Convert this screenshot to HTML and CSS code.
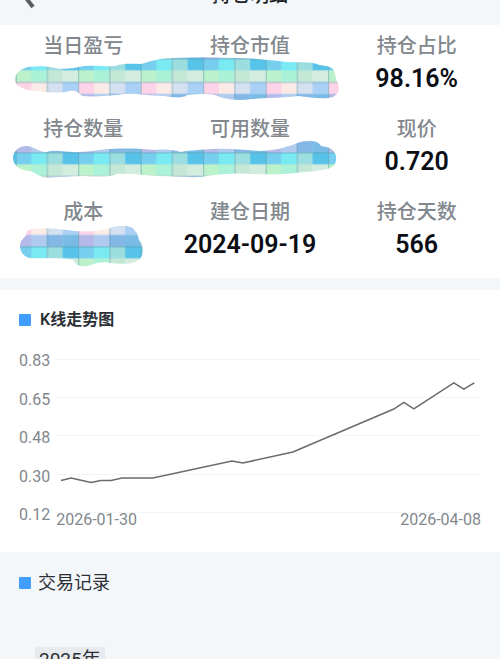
FILE: index.html
```html
<!DOCTYPE html>
<html lang="zh-CN">
<head>
    <meta charset="UTF-8">
    <meta name="viewport" content="width=device-width, initial-scale=1.0">
    <title>持仓明细</title>
    <link rel="stylesheet" href="styles.css">
</head>
<body>
    <header class="topbar">
        <button class="back" type="button" aria-label="返回">
            <svg width="16" height="28" viewBox="0 0 16 28"><path d="M13 1 L3 13 L13 26" fill="none" stroke="#5a5e63" stroke-width="4"/></svg>
        </button>
        <h1>持仓明细</h1>
    </header>

    <section class="stats">
        <!-- mosaic shared by the masked values -->
        <svg class="defs" width="0" height="0">
            <defs>
                <pattern id="mosaic" x="15.7" y="58.5" width="62.5" height="47" patternUnits="userSpaceOnUse">
                    <rect x="0" y="0" width="16" height="12" fill="#76cfee"/>
                    <rect x="15.6" y="0" width="16" height="12" fill="#79e9f2"/>
                    <rect x="31.2" y="0" width="16" height="12" fill="#9cdee0"/>
                    <rect x="46.8" y="0" width="16" height="12" fill="#58c3e8"/>
                    <rect x="0" y="11.8" width="16" height="12" fill="#bbf1cb"/>
                    <rect x="15.6" y="11.8" width="16" height="12" fill="#abf1d8"/>
                    <rect x="31.2" y="11.8" width="16" height="12" fill="#c5e7d5"/>
                    <rect x="46.8" y="11.8" width="16" height="12" fill="#d2ece0"/>
                    <rect x="0" y="23.5" width="16" height="12" fill="#fdd3e7"/>
                    <rect x="15.6" y="23.5" width="16" height="12" fill="#fceae6"/>
                    <rect x="31.2" y="23.5" width="16" height="12" fill="#d5e0f1"/>
                    <rect x="46.8" y="23.5" width="16" height="12" fill="#abd0f5"/>
                    <rect x="0" y="35.3" width="16" height="12" fill="#b4bae8"/>
                    <rect x="15.6" y="35.3" width="16" height="12" fill="#b0cbee"/>
                    <rect x="31.2" y="35.3" width="16" height="12" fill="#83b8e6"/>
                    <rect x="46.8" y="35.3" width="16" height="12" fill="#79bbe5"/>
                    <path d="M0.5 0V47M31.7 0V47M0 0.5H63M0 24H63" stroke="#4f8fa0" stroke-opacity="0.5" fill="none"/>
                </pattern>
            </defs>
        </svg>

        <div class="label">当日盈亏</div>
        <div class="label">持仓市值</div>
        <div class="label">持仓占比</div>
        <svg class="masked wide" width="333" height="43" viewBox="0 65 333 43">
            <path fill="url(#mosaic)" d="M15 79C15 73 21 69 28 67C38 66 47 66 55 68C66 70 74 68 84 66C96 65 106 67 115 66C124 63 132 64 141 64C151 61 161 58 174 58C194 57 214 57 234 58C252 58 270 60 287 62C300 63 312 61 319 65C326 66 332 66 334 71C336 76 336 80 338 84C341 91 337 97 328 98C318 99 309 97 298 96C282 98 264 98 252 99C241 101 229 100 220 97C212 93 201 94 187 95C183 99 171 97 164 96C148 96 137 93 124 94C108 96 94 97 83 96C77 94 79 90 70 91C58 94 47 92 36 91C23 90 14 85 15 79Z"/>
        </svg>
        <div class="value">98.16%</div>

        <div class="label">持仓数量</div>
        <div class="label">可用数量</div>
        <div class="label">现价</div>
        <svg class="masked wide" width="333" height="43" viewBox="0 148 333 43">
            <path fill="url(#mosaic)" d="M13 158C13 151 19 146 26 146C34 146 38 152 46 152C57 149 68 153 79 152C91 152 100 149 111 149C128 148 145 149 155 150C166 149 174 150 181 152C190 150 202 150 213 149C230 148 244 150 260 151C275 151 286 147 295 144C305 140 317 139 321 146C329 147 334 149 336 156C337 164 333 168 327 169C316 172 306 171 296 173C278 175 264 174 251 174C234 173 221 174 207 176C191 179 176 176 160 176C146 176 131 173 117 174C111 177 100 177 84 176C70 176 58 177 48 178C39 177 36 173 30 171C21 171 13 166 13 158Z"/>
        </svg>
        <div class="value">0.720</div>

        <div class="label">成本</div>
        <div class="label">建仓日期</div>
        <div class="label">持仓天数</div>
        <svg class="masked" width="160" height="43" viewBox="0 231 160 43">
            <path fill="url(#mosaic)" d="M20 246C20 241 24 238 26 235C26 231 29 229 34 229C48 227 60 229 74 231C86 232 98 231 108 229C117 225 132 224 135 231C139 234 137 238 141 243C144 250 143 256 139 260C131 265 120 264 110 263C101 261 94 264 88 266C80 267 75 265 73 260C59 257 43 259 29 258C23 256 20 251 20 246Z"/>
        </svg>
        <div class="value">2024-09-19</div>
        <div class="value">566</div>
    </section>

    <section class="trend">
        <h2 class="title">K线走势图</h2>
        <div class="chart">
            <div class="axis-y">
                <span>0.83</span>
                <span>0.65</span>
                <span>0.48</span>
                <span>0.30</span>
                <span>0.12</span>
            </div>
            <div class="plot">
                <svg viewBox="0 0 425 154" preserveAspectRatio="none" role="img" aria-label="K线走势图">
                    <path class="grid" d="M0 0.5H425M0 38.5H425M0 76.5H425M0 115.5H425M0 153.5H425"/>
                    <polyline class="line" points="5,121.5 15,119 25,121.2 35,123.5 45,121.5 55,121.5 66,119 97,119 176,102 187,104 237,93 338,50 348,43.3 358,49.8 398,23.8 408,30.2 418.5,23.8"/>
                </svg>
                <div class="axis-x">
                    <span>2026-01-30</span>
                    <span>2026-04-08</span>
                </div>
            </div>
        </div>
    </section>

    <section class="records">
        <h2 class="title">交易记录</h2>
        <div class="year">2025年</div>
    </section>
</body>
</html>
```
FILE: styles.css
```css
* {
    box-sizing: border-box;
}

body {
    margin: 0;
    font-family: Roboto, "Noto Sans CJK SC", sans-serif;
    background: #f3f7fa;
    color: #2c3035;
}

.topbar {
    position: relative;
    display: flex;
    align-items: flex-end;
    justify-content: center;
    height: 25px;
    padding-bottom: 15px;
    overflow: hidden;
}

.topbar h1 {
    margin: 0;
    font-size: 19px;
    line-height: 28px;
    font-weight: 500;
    color: #1b1f24;
}

.back {
    position: absolute;
    left: 20px;
    bottom: 16px;
    padding: 0;
    border: none;
    background: none;
    line-height: 0;
}

.stats {
    display: grid;
    grid-template-columns: repeat(3, 1fr);
    padding-bottom: 4px;
    background: #fff;
    text-align: center;
}

.defs {
    position: absolute;
}

.label {
    height: 40px;
    font-size: 20px;
    line-height: 42px;
    font-weight: 500;
    color: #82888d;
}

.value {
    height: 43px;
    font-size: 25px;
    line-height: 27px;
    font-weight: 600;
    color: #0b0e14;
}

.masked {
    display: block;
    overflow: visible;
}

.wide {
    grid-column: span 2;
}

.trend {
    margin-top: 12px;
    padding: 18px 19px 22px;
    background: #fff;
}

.title {
    display: flex;
    align-items: center;
    gap: 9px;
    margin: 0;
    font-size: 16px;
    line-height: 24px;
    font-weight: 600;
}

.title::before {
    content: "";
    width: 12px;
    height: 12px;
    border-radius: 1px;
    background: #409eff;
}

.chart {
    display: flex;
    gap: 6px;
    margin-top: 19px;
    font-size: 16px;
    line-height: 20px;
    color: #82878c;
}

.axis-y {
    display: flex;
    flex-direction: column;
    justify-content: space-between;
    height: 174px;
}

.plot {
    flex: 1;
    padding-top: 8px;
}

.plot svg {
    display: block;
    width: 100%;
    height: 154px;
}

.grid {
    fill: none;
    stroke: #f3f4f5;
}

.line {
    fill: none;
    stroke: #6b6b6e;
    stroke-width: 1.5;
    vector-effect: non-scaling-stroke;
}

.axis-x {
    display: flex;
    justify-content: space-between;
    margin-top: -3px;
}

.records {
    padding: 17px 19px;
}

.records .title {
    gap: 7px;
    font-size: 18px;
    line-height: 28px;
    font-weight: 400;
}

.year {
    width: fit-content;
    margin: 50px 16px 0;
    padding: 0 4px;
    border-radius: 2px;
    background: #e8ebee;
    font-size: 19px;
    line-height: 26px;
}
```
